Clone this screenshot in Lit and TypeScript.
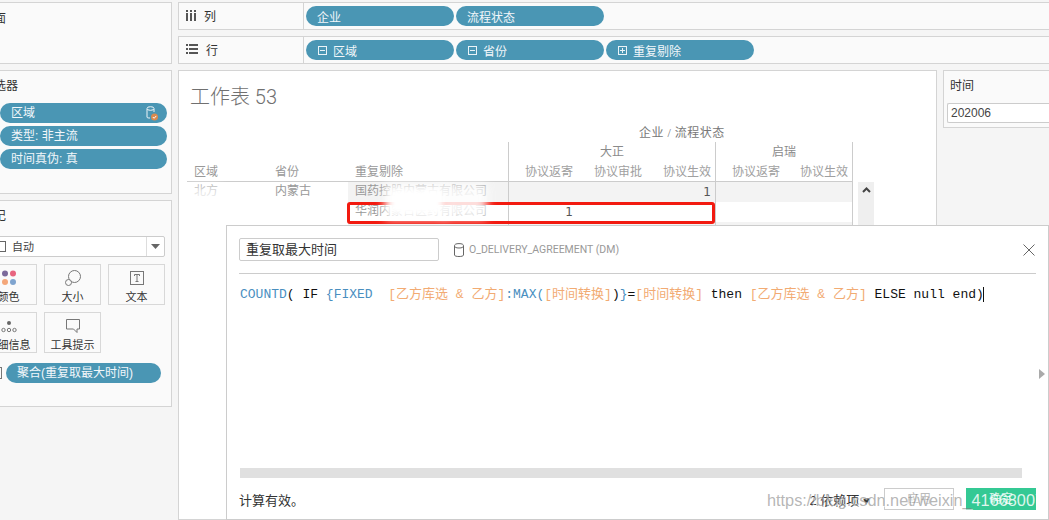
import { LitElement, html, css, svg } from "lit";
import { customElement } from "lit/decorators.js";

const SANS = css`"Liberation Sans", "Noto Sans CJK SC", sans-serif`;
const SERIF = css`"Liberation Serif", "Noto Sans CJK SC", serif`;

@customElement("app-root")
export class AppRoot extends LitElement {
  static styles = css`
    :host {
      display: block;
      position: relative;
      width: 1049px;
      height: 520px;
      overflow: hidden;
      background: #f5f5f5;
      font-family: ${SANS};
      font-size: 12px;
      color: #333;
    }
    * { box-sizing: border-box; }
    .shell {
      display: grid;
      grid-template-columns: 201px 1fr;
      column-gap: 6px;
      margin-left: -29px;
      padding-top: 2px;
      height: 520px;
      width: 1078px;
    }
    .left { display: flex; flex-direction: column; gap: 6px; }
    .panel {
      background: #fafafa;
      border: 1px solid #d4d4d4;
      padding: 8px 10px;
      font-size: 12px;
      line-height: 14px;
    }
    .pages { height: 62px; }
    .pages .head { margin-top: 1px; }
    .filters { height: 124px; padding: 8px 4px 0 28px; }
    .filters .head { margin: 0 0 10px -18px; }
    .stack { display: flex; flex-direction: column; gap: 3px; }
    .pill {
      display: flex;
      align-items: center;
      height: 20px;
      border-radius: 10px;
      background: #4a96b4;
      color: #f2f7fa;
      font-size: 12px;
      padding-left: 11px;
      white-space: nowrap;
    }
    .pill .grow { flex: 1; }
    .pill svg { margin-right: 6px; }
    .marks { height: 207px; padding: 7px 6px 0 8px; }
    .marks .head { margin: 1px 0 13px 2px; }
    .dropdown {
      display: flex;
      align-items: center;
      height: 21px;
      border: 1px solid #ccc;
      border-radius: 2px;
      background: #fff;
      font-size: 11px;
      color: #444;
      padding-left: 14px;
      gap: 6px;
    }
    .dropdown .grow { flex: 1; }
    .dropdown .caret {
      width: 18px;
      height: 19px;
      border-left: 1px solid #ddd;
      display: flex;
      align-items: center;
      justify-content: center;
    }
    .btns {
      display: grid;
      grid-template-columns: repeat(3, 57px);
      grid-auto-rows: 41px;
      gap: 7px;
      margin-top: 7px;
    }
    .btn {
      border: 1px solid #d8d8d8;
      background: #fafafa;
      display: flex;
      flex-direction: column;
      align-items: center;
      font-size: 11px;
      line-height: 13px;
      color: #333;
      padding-top: 3px;
      gap: 2px;
      white-space: nowrap;
    }
    .btn svg { display: block; margin-top: 1px; }
    .btn span { margin-top: 2px; }
    .aggr { display: flex; align-items: center; margin-top: 10px; gap: 3px; }
    .aggr .mini { width: 12px; height: 12px; margin-left: 10px; border: 1px solid #777; }
    .aggr .pill { width: 155px; margin-left: 1px; }

    .right { display: flex; flex-direction: column; gap: 6px; min-width: 0; }
    .shelf {
      flex: none;
      display: grid;
      grid-template-columns: 125px 1fr;
      height: 28px;
      background: #fafafa;
      border: 1px solid #d4d4d4;
      border-right: 0;
    }
    .shelf .name {
      display: flex;
      align-items: center;
      gap: 8px;
      padding: 0 0 2px 7px;
      border-right: 1px solid #d4d4d4;
      font-size: 12px;
      color: #333;
    }
    .shelf .pills { display: flex; align-items: flex-start; gap: 2px; padding: 3px 0 0 2px; }
    .shelf .pill { width: 148px; }
    .shelf .pill svg { margin: 0 6px 0 1px; }
    .content { flex: 1; display: flex; gap: 6px; min-height: 0; }
    .sheet {
      width: 759px;
      background: #fff;
      border: 1px solid #d4d4d4;
      padding: 13px 0 0 8px;
      overflow: hidden;
    }
    .title {
      font-family: Roboto, "Noto Sans CJK SC", sans-serif;
      font-size: 20px;
      line-height: 26px;
      color: #707070;
      font-weight: 300;
      padding-left: 3px;
    }
    .caption {
      width: 666px;
      margin-top: 15px;
      height: 17px;
      padding-left: 452px;
      font-size: 12px;
      line-height: 17px;
      letter-spacing: 0.5px;
      color: #777;
      font-family: ${SERIF};
    }
    .table-row { display: flex; align-items: flex-start; }
    .table {
      display: grid;
      grid-template-columns: 81px 80px 160px repeat(5, 69px);
      grid-template-rows: 20px 20px 20px 20px 20px;
      width: 667px;
      color: #999;
      line-height: 20px;
      font-family: ${SERIF};
      position: relative;
    }
    .c { padding: 0 7px; white-space: nowrap; overflow: hidden; }
    .hd { text-align: center; padding: 0; color: #8a8a8a; }
    .sub { text-align: right; padding: 0 4px 0 0; color: #a0a0a0; }
    .lbl { color: #999; }
    .low { line-height: 18px; }
    .rule { border-bottom: 1px solid #ccc; }
    .vl { border-left: 1px solid #ccc; }
    .vr { border-right: 1px solid #ccc; }
    .gray { background: #f3f3f3; }
    .num {
      text-align: right;
      padding: 0 4px 0 0;
      font-family: "DejaVu Sans", sans-serif;
      font-size: 12px;
      color: #555;
    }
    .scroll {
      width: 16px;
      margin: 40px 0 0 4px;
      height: 100px;
      background: #efefef;
      display: flex;
      justify-content: center;
      padding-top: 5px;
    }
    .redbox {
      position: absolute;
      left: 160px;
      top: 60px;
      width: 368px;
      height: 22px;
      border: 3px solid #f21a10;
      border-radius: 3px;
    }
    .smear {
      position: absolute;
      background: #fff;
      filter: blur(5px);
    }
    .s1 { left: 0; top: 44px; width: 34px; height: 20px; opacity: 0.8; }
    .s2 { left: 198px; top: 42px; width: 62px; height: 35px; }
    .s3 { left: 256px; top: 42px; width: 44px; height: 35px; opacity: 0.85; }
    .time {
      flex: 1;
      height: 58px;
      background: #fafafa;
      border: 1px solid #d4d4d4;
      border-right: 0;
      padding: 8px 0 0 3px;
    }
    .time .head { padding-left: 3px; line-height: 14px; }
    .time .inp {
      margin-top: 10px;
      height: 20px;
      border: 1px solid #ccc;
      border-right: 0;
      border-radius: 2px 0 0 2px;
      background: #fff;
      line-height: 18px;
      padding-left: 3px;
      font-size: 12px;
      color: #444;
    }

    .dialog {
      position: absolute;
      left: 226px;
      top: 225px;
      width: 823px;
      height: 295px;
      background: #fff;
      border: 1px solid #ccc;
      padding: 12px 12px 0 12px;
      display: flex;
      flex-direction: column;
    }
    .dhead { display: flex; align-items: center; height: 23px; }
    .name-inp {
      width: 200px;
      height: 23px;
      border: 1px solid #ccc;
      border-radius: 2px;
      font-size: 13px;
      line-height: 21px;
      padding-left: 6px;
      color: #333;
    }
    .src {
      display: flex;
      align-items: center;
      gap: 5px;
      margin-left: 15px;
      font-family: Roboto, sans-serif;
      font-size: 10.5px;
      color: #999;
      flex: 1;
    }
    .close { margin-right: 1px; display: block; }
    .divider { height: 1px; background: #ccc; margin-top: 12px; }
    .formula {
      flex: 1;
      margin: 13px 0 0 1px;
      font-family: "Liberation Mono", "Noto Sans CJK SC", monospace;
      font-size: 13px;
      line-height: 15px;
      white-space: pre;
      color: #111;
    }
    .k { color: #4a8fbf; }
    .f { color: #f2ab73; }
    .cursor {
      display: inline-block;
      width: 1px;
      height: 15px;
      background: #111;
      vertical-align: top;
      margin-left: -1px;
    }
    .arrow {
      position: absolute;
      right: 3px;
      top: 143px;
      width: 0;
      height: 0;
      border-left: 6px solid #aaa;
      border-top: 5px solid transparent;
      border-bottom: 5px solid transparent;
    }
    .hscroll { height: 10px; margin: 0 14px 0 1px; background: #e0e0e0; }
    .foot {
      display: flex;
      align-items: center;
      height: 22px;
      margin-top: 10px;
      margin-bottom: 9px;
      font-size: 13px;
      color: #333;
    }
    .foot .grow { flex: 1; }
    .dep { font-size: 13px; margin-right: 14px; }
    .fbtn {
      width: 70px;
      height: 22px;
      text-align: center;
      line-height: 20px;
      font-size: 12px;
    }
    .apply { border: 1px solid #ccc; color: #bbb; margin-right: 12px; }
    .ok { background: #34c994; color: #d8f5ea; line-height: 22px; }
    .mark {
      position: absolute;
      left: 767px;
      top: 490px;
      font-family: "Liberation Sans", sans-serif;
      font-size: 16.3px;
      line-height: 20px;
      color: rgba(120,120,120,0.55);
      text-shadow: 1px 1px 0 rgba(255,255,255,0.6);
      white-space: nowrap;
    }
    .mark .on-green { color: rgba(255,255,255,0.85); text-shadow: none; }
  `;

  private minus() {
    return svg`<svg width="9" height="9" viewBox="0 0 9 9" fill="none" stroke="#eaf3f7"><rect x=".5" y=".5" width="8" height="8"/><path d="M2 4.500h5"/></svg>`;
  }
  private plus() {
    return svg`<svg width="9" height="9" viewBox="0 0 9 9" fill="none" stroke="#eaf3f7"><rect x=".5" y=".5" width="8" height="8"/><path d="M2 4.500h5M4.500 2v5"/></svg>`;
  }
  private db(color: string, w = 10, h = 14) {
    return svg`<svg width=${w} height=${h} viewBox="0 0 10 14" fill="none" stroke=${color}><path d="M.5 3v9c0 1 2 1.500 4.500 1.500S9.500 13 9.500 12V3"/><ellipse cx="5" cy="2.800" rx="4.500" ry="2.200"/></svg>`;
  }

  render() {
    return html`
      <div class="shell">
        <div class="left">
          <div class="panel pages"><div class="head">页面</div></div>
          <div class="panel filters">
            <div class="head">筛选器</div>
            <div class="stack">
              <div class="pill">
                <span>区域</span><span class="grow"></span>
                <svg width="12" height="15" viewBox="0 0 12 15" fill="none" style="margin-right:9px">
                  <path d="M1 3v8c0 1 1.500 1 3 1M8 3v3" stroke="#eef5f8"/>
                  <ellipse cx="4.500" cy="2.500" rx="3.500" ry="1.800" stroke="#eef5f8"/>
                  <circle cx="8.500" cy="11" r="3.500" fill="#d98a4e"/>
                  <path d="M6.800 11l1.300 1.300 2.200-2.400" stroke="#fff"/>
                </svg>
              </div>
              <div class="pill">类型: 非主流</div>
              <div class="pill">时间真伪: 真</div>
            </div>
          </div>
          <div class="panel marks">
            <div class="head">标记</div>
            <div class="dropdown">
              <svg width="11" height="11" viewBox="0 0 11 11" fill="none" stroke="#666"><rect x=".5" y=".5" width="10" height="10"/></svg>
              <span>自动</span><span class="grow"></span>
              <span class="caret"><svg width="9" height="5" viewBox="0 0 9 5"><path d="M0 0h9L4.500 5z" fill="#666"/></svg></span>
            </div>
            <div class="btns">
              <div class="btn">
                <svg width="18" height="18" viewBox="0 0 18 18">
                  <circle cx="5" cy="4.500" r="3" fill="#7b6a9b"/><circle cx="13" cy="4.500" r="3" fill="#e8657f"/>
                  <circle cx="5" cy="13" r="3" fill="#f4a77a"/><circle cx="13" cy="13" r="3" fill="#7fa4cf"/>
                </svg>
                <span>颜色</span>
              </div>
              <div class="btn">
                <svg width="18" height="18" viewBox="0 0 18 18" fill="none" stroke="#777">
                  <circle cx="10.500" cy="7.500" r="6"/><circle cx="4.500" cy="13.500" r="3" fill="#fafafa"/>
                </svg>
                <span>大小</span>
              </div>
              <div class="btn">
                <svg width="18" height="18" viewBox="0 0 18 18" fill="none" stroke="#777">
                  <rect x="2.500" y="2.500" width="13" height="13"/>
                  <path d="M6.500 7V5.500h5V7M9 5.500v7M7.500 12.500h3"/>
                </svg>
                <span>文本</span>
              </div>
              <div class="btn">
                <svg width="18" height="18" viewBox="0 0 18 18" fill="none" stroke="#777">
                  <circle cx="9" cy="6" r="2" fill="#666" stroke="none"/>
                  <circle cx="3.500" cy="13" r="1.700"/><circle cx="9" cy="13" r="1.700"/><circle cx="14.500" cy="13" r="1.700"/>
                </svg>
                <span>详细信息</span>
              </div>
              <div class="btn">
                <svg width="18" height="18" viewBox="0 0 18 18" fill="none" stroke="#777">
                  <path d="M2.500 2.500h13v9.500h-2.500v3.500l-3.500-3.500h-7z"/>
                </svg>
                <span>工具提示</span>
              </div>
            </div>
            <div class="aggr">
              <span class="mini"></span>
              <div class="pill">聚合(重复取最大时间)</div>
            </div>
          </div>
        </div>

        <div class="right">
          <div class="shelf">
            <div class="name">
              <svg width="10" height="11" viewBox="0 0 10 11" fill="#555"><rect x="0" y="0" width="2" height="2"/><rect x="4" y="0" width="2" height="2"/><rect x="8" y="0" width="2" height="2"/><rect x="0" y="3" width="2" height="8"/><rect x="4" y="3" width="2" height="8"/><rect x="8" y="3" width="2" height="8"/></svg>
              <span>列</span>
            </div>
            <div class="pills">
              <div class="pill">企业</div>
              <div class="pill">流程状态</div>
            </div>
          </div>
          <div class="shelf">
            <div class="name">
              <svg width="12" height="10" viewBox="0 0 12 10" fill="#555"><rect x="0" y="0" width="2" height="2"/><rect x="3" y="0" width="9" height="2"/><rect x="0" y="4" width="2" height="2"/><rect x="3" y="4" width="9" height="2"/><rect x="0" y="8" width="2" height="2"/><rect x="3" y="8" width="9" height="2"/></svg>
              <span>行</span>
            </div>
            <div class="pills">
              <div class="pill">${this.minus()}区域</div>
              <div class="pill">${this.minus()}省份</div>
              <div class="pill">${this.plus()}重复剔除</div>
            </div>
          </div>
          <div class="content">
            <div class="sheet">
              <div class="title">工作表 53</div>
              <div class="caption">企业 / 流程状态</div>
              <div class="table-row">
                <div class="table">
                  <div class="c" style="grid-column:1/4"></div>
                  <div class="c hd vl" style="grid-column:4/7">大正</div>
                  <div class="c hd vl vr" style="grid-column:7/9">启瑞</div>

                  <div class="c lbl rule">区域</div>
                  <div class="c lbl rule">省份</div>
                  <div class="c lbl rule">重复剔除</div>
                  <div class="c sub rule vl">协议返寄</div>
                  <div class="c sub rule">协议审批</div>
                  <div class="c sub rule">协议生效</div>
                  <div class="c sub rule vl">协议返寄</div>
                  <div class="c sub rule vr">协议生效</div>

                  <div class="c lbl low">北方</div>
                  <div class="c lbl low">内蒙古</div>
                  <div class="c lbl low gray">国药控股内蒙古有限公司</div>
                  <div class="c gray vl"></div>
                  <div class="c gray"></div>
                  <div class="c gray num">1</div>
                  <div class="c gray vl"></div>
                  <div class="c gray vr"></div>

                  <div class="c"></div>
                  <div class="c"></div>
                  <div class="c lbl low">华润内蒙古医药有限公司</div>
                  <div class="c num vl">1</div>
                  <div class="c"></div>
                  <div class="c"></div>
                  <div class="c vl"></div>
                  <div class="c vr"></div>

                  <div class="c"></div>
                  <div class="c"></div>
                  <div class="c gray"></div>
                  <div class="c gray vl"></div>
                  <div class="c gray"></div>
                  <div class="c gray"></div>
                  <div class="c gray vl"></div>
                  <div class="c gray vr"></div>

                  <div class="redbox"></div>
                  <div class="smear s1"></div>
                  <div class="smear s2"></div>
                  <div class="smear s3"></div>
                </div>
                <div class="scroll">
                  <svg width="9" height="6" viewBox="0 0 9 6" fill="none" stroke="#444" stroke-width="2"><path d="M1 5l3.500-3.500L8 5"/></svg>
                </div>
              </div>
            </div>
            <div class="time">
              <div class="head">时间</div>
              <div class="inp">202006</div>
            </div>
          </div>
        </div>
      </div>

      <div class="dialog">
        <div class="dhead">
          <div class="name-inp">重复取最大时间</div>
          <div class="src">${this.db("#666", 10, 14)}<span>O_DELIVERY_AGREEMENT (DM)</span></div>
          <svg class="close" width="12" height="12" viewBox="0 0 12 12" stroke="#666" fill="none"><path d="M.5.5l11 11M11.500.5l-11 11"/></svg>
        </div>
        <div class="divider"></div>
        <div class="formula"><span class="k">COUNTD</span>( IF <span class="k">{FIXED</span>  <span class="f">[乙方库选 &amp; 乙方]</span><span class="k">:MAX(</span><span class="f">[时间转换]</span>)<span class="k">}</span>=<span class="f">[时间转换]</span> then <span class="f">[乙方库选 &amp; 乙方]</span> ELSE null end)<span class="cursor"></span></div>
        <div class="arrow"></div>
        <div class="hscroll"></div>
        <div class="foot">
          <span>计算有效。</span><span class="grow"></span>
          <span class="dep">2 依赖项 ▾</span>
          <div class="fbtn apply">应用</div>
          <div class="fbtn ok">确定</div>
        </div>
      </div>
      <div class="mark">https://blog.csdn.net/weixin_<span class="on-green">41668007</span></div>
    `;
  }
}
